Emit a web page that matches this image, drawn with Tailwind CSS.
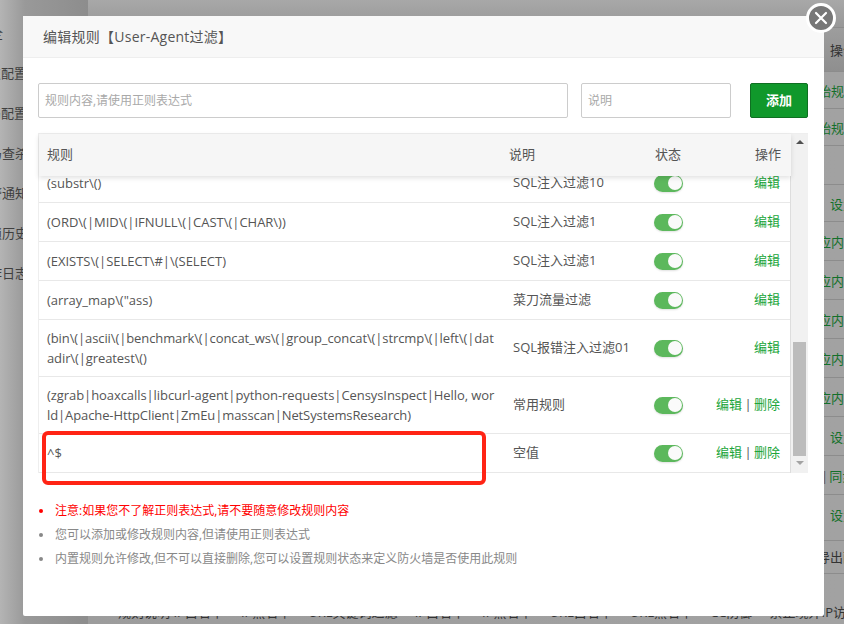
<!DOCTYPE html>
<html lang="zh">
<head>
<meta charset="utf-8">
<script src="https://cdn.jsdelivr.net/npm/@tailwindcss/browser@4"></script>
</head>
<body class="m-0 font-['Open_Sans','Noto_Sans_CJK_SC',sans-serif]">
<div class="relative w-[844px] h-[624px] overflow-hidden bg-[#a3a3a3] text-[14px] text-[#333]">
  <!-- page behind the overlay -->
  <div class="flex h-full">
    <aside class="w-[88px] shrink-0 pt-[13px] bg-[linear-gradient(90deg,#b4b4b4,#999999_25px,#8d8d8d)] text-[13px] text-[#3f3f3f]">
      <div class="w-[3px] h-[40px] leading-[40px] flex justify-end whitespace-nowrap">网站安全</div>
      <div class="w-[27px] h-[40px] leading-[40px] flex justify-end whitespace-nowrap">站点配置</div>
      <div class="w-[27px] h-[40px] leading-[40px] flex justify-end whitespace-nowrap">全局配置</div>
      <div class="w-[28px] h-[40px] leading-[40px] flex justify-end whitespace-nowrap">木马查杀</div>
      <div class="w-[28px] h-[40px] leading-[40px] flex justify-end whitespace-nowrap">告警通知</div>
      <div class="w-[28px] h-[40px] leading-[40px] flex justify-end whitespace-nowrap">封锁历史</div>
      <div class="w-[28px] h-[40px] leading-[40px] flex justify-end whitespace-nowrap">操作日志</div>
    </aside>
    <main class="flex-1 min-w-0 flex flex-col bg-gradient-to-r from-[#9c9c9c] to-[#a2a2a2] text-[13px] whitespace-nowrap">
      <div class="h-[28px] bg-gradient-to-b from-[#a8a8a8] to-[#989898] border-b border-[#8c8c8c]"></div>
      <div class="h-[44px] leading-[45px] border-b border-[#8c8c8c] pl-[742px] bg-gradient-to-b from-[#9d9d9d] to-[#8f8f8f] text-[#333]">操作</div>
      <div class="h-[37px] leading-[38px] border-b border-[#8c8c8c] pl-[717px] text-[#14702a]">开始规则</div>
      <div class="h-[37px] leading-[38px] border-b border-[#8c8c8c] pl-[717px] text-[#14702a]">开始规则</div>
      <div class="h-[39px] border-b border-[#8c8c8c]"></div>
      <div class="h-[37px] leading-[38px] border-b border-[#8c8c8c] pl-[742px] text-[#14702a]">设置</div>
      <div class="h-[39px] leading-[40px] border-b border-[#8c8c8c] pl-[717px] text-[#14702a]">响应内容</div>
      <div class="h-[39px] leading-[40px] border-b border-[#8c8c8c] pl-[717px] text-[#14702a]">响应内容</div>
      <div class="h-[39px] leading-[40px] border-b border-[#8c8c8c] pl-[717px] text-[#14702a]">响应内容</div>
      <div class="h-[39px] leading-[40px] border-b border-[#8c8c8c] pl-[717px] text-[#14702a]">响应内容</div>
      <div class="h-[39px] leading-[40px] border-b border-[#8c8c8c] pl-[717px] text-[#14702a]">响应内容</div>
      <div class="h-[39px] leading-[40px] border-b border-[#8c8c8c] pl-[742px] text-[#14702a]">设置</div>
      <div class="h-[39px] leading-[40px] border-b border-[#8c8c8c] pl-[733px] text-[#14702a]"><span class="text-[#555] mr-[1px]">|</span>同步</div>
      <div class="h-[46px] leading-[40px] border-b border-[#8c8c8c] pl-[742px] text-[#14702a]">设置</div>
      <div class="h-[33px] leading-[33px] border-b border-[#8c8c8c] pl-[729px] text-[#333]">导出配置</div>
      <div class="mt-[29px] ml-[30px] flex gap-[17px] text-[#333] leading-[18px]">
        <span>规则说明·IP白名单</span><span>IP黑名单</span><span>URL关键词过滤</span><span>IP白名单</span><span>IP黑名单</span><span>URL白名单</span><span>URL黑名单</span><span>CC防御</span><span>禁止境外IP访问</span>
      </div>
    </main>
  </div>

  <!-- modal -->
  <section class="absolute left-[23px] top-[16px] w-[801px] h-[600px] bg-white rounded-[2px] flex flex-col">
    <header class="h-[42px] shrink-0 pl-[20px] leading-[42px] bg-[#f8f8f8] border-b border-[#eeeeee] text-[14px] tracking-[0.25px] text-[#555]">编辑规则【User-Agent过滤】</header>

    <div class="flex-1 flex flex-col pl-[15px] pr-[16px] pt-[25px]">
      <div class="flex h-[35px] text-[12px]">
        <div class="w-[530px] border border-[#cccccc] rounded-[2px] pl-[6px] leading-[33px] text-[#a9a9a9]">规则内容,请使用正则表达式</div>
        <div class="w-[150px] ml-[13px] border border-[#cccccc] rounded-[2px] pl-[6px] leading-[33px] text-[#a9a9a9]">说明</div>
        <button class="w-[58px] ml-[19px] rounded-[2px] bg-[#10982b] border border-[#0f6f22] text-white text-[13px] font-semibold">添加</button>
      </div>

      <div class="relative mt-[15px] h-[340px] w-[770px] flex border-t border-l border-[#eeeeee] text-[13px] text-[#555]">
        <div class="w-[752px] h-full flex flex-col">
          <div class="relative z-10 h-[42px] shrink-0 flex items-center bg-[#f6f6f6] shadow-[0_2px_5px_rgba(0,0,0,0.12)] pr-[10px]">
            <span class="w-[470px] pl-[8px]">规则</span>
            <span class="w-[146px]">说明</span>
            <span class="w-[92px]">状态</span>
            <span class="ml-auto">操作</span>
          </div>
          <div class="flex-1 overflow-hidden border-r border-[#dddddd]">
            <div class="-mt-[12px]">
              <!-- rows -->
              <div class="h-[39px] flex items-center border-b border-[#e8e8e8] pr-[10px]">
                <div class="w-[474px] shrink-0 pl-[8px] pr-[16px] break-all leading-[20px] tracking-[-0.02px]">(substr\()</div>
                <div class="w-[141px] shrink-0">SQL注入过滤10</div>
                <div class="w-[29px] h-[17px] shrink-0 flex justify-end items-center pr-[1px] rounded-full bg-[#5cb85c] shadow-[0_1px_2px_rgba(0,0,0,0.12)]"><span class="w-[14px] h-[14px] rounded-full bg-[#fafafa]"></span></div>
                <div class="ml-auto text-[#20a53a]">编辑</div>
              </div>
              <div class="h-[39px] flex items-center border-b border-[#e8e8e8] pr-[10px]">
                <div class="w-[474px] shrink-0 pl-[8px] pr-[16px] break-all leading-[20px] tracking-[-0.02px]">(ORD\(|MID\(|IFNULL\(|CAST\(|CHAR\))</div>
                <div class="w-[141px] shrink-0">SQL注入过滤1</div>
                <div class="w-[29px] h-[17px] shrink-0 flex justify-end items-center pr-[1px] rounded-full bg-[#5cb85c] shadow-[0_1px_2px_rgba(0,0,0,0.12)]"><span class="w-[14px] h-[14px] rounded-full bg-[#fafafa]"></span></div>
                <div class="ml-auto text-[#20a53a]">编辑</div>
              </div>
              <div class="h-[39px] flex items-center border-b border-[#e8e8e8] pr-[10px]">
                <div class="w-[474px] shrink-0 pl-[8px] pr-[16px] break-all leading-[20px] tracking-[-0.02px]">(EXISTS\(|SELECT\#|\(SELECT)</div>
                <div class="w-[141px] shrink-0">SQL注入过滤1</div>
                <div class="w-[29px] h-[17px] shrink-0 flex justify-end items-center pr-[1px] rounded-full bg-[#5cb85c] shadow-[0_1px_2px_rgba(0,0,0,0.12)]"><span class="w-[14px] h-[14px] rounded-full bg-[#fafafa]"></span></div>
                <div class="ml-auto text-[#20a53a]">编辑</div>
              </div>
              <div class="h-[39px] flex items-center border-b border-[#e8e8e8] pr-[10px]">
                <div class="w-[474px] shrink-0 pl-[8px] pr-[16px] break-all leading-[20px] tracking-[-0.02px]">(array_map\("ass)</div>
                <div class="w-[141px] shrink-0">菜刀流量过滤</div>
                <div class="w-[29px] h-[17px] shrink-0 flex justify-end items-center pr-[1px] rounded-full bg-[#5cb85c] shadow-[0_1px_2px_rgba(0,0,0,0.12)]"><span class="w-[14px] h-[14px] rounded-full bg-[#fafafa]"></span></div>
                <div class="ml-auto text-[#20a53a]">编辑</div>
              </div>
              <div class="h-[57px] flex items-center border-b border-[#e8e8e8] pr-[10px]">
                <div class="w-[474px] shrink-0 pl-[8px] pr-[16px] break-all leading-[20px] tracking-[-0.1px]">(bin\(|ascii\(|benchmark\(|concat_ws\(|group_concat\(|strcmp\(|left\(|datadir\(|greatest\()</div>
                <div class="w-[141px] shrink-0">SQL报错注入过滤01</div>
                <div class="w-[29px] h-[17px] shrink-0 flex justify-end items-center pr-[1px] rounded-full bg-[#5cb85c] shadow-[0_1px_2px_rgba(0,0,0,0.12)]"><span class="w-[14px] h-[14px] rounded-full bg-[#fafafa]"></span></div>
                <div class="ml-auto text-[#20a53a]">编辑</div>
              </div>
              <div class="h-[57px] flex items-center border-b border-[#e8e8e8] pr-[10px]">
                <div class="w-[474px] shrink-0 pl-[8px] break-all leading-[20px] tracking-[-0.1px]"><span class="tracking-[-0.07px]">(zgrab|hoaxcalls|libcurl-agent|python-requests|CensysInspect|Hello, wor</span><br>ld|Apache-HttpClient|ZmEu|masscan|NetSystemsResearch)</div>
                <div class="w-[141px] shrink-0">常用规则</div>
                <div class="w-[29px] h-[17px] shrink-0 flex justify-end items-center pr-[1px] rounded-full bg-[#5cb85c] shadow-[0_1px_2px_rgba(0,0,0,0.12)]"><span class="w-[14px] h-[14px] rounded-full bg-[#fafafa]"></span></div>
                <div class="ml-auto text-[#20a53a] flex">编辑<span class="w-[12px] text-center text-[#555]">|</span>删除</div>
              </div>
              <div class="h-[39px] flex items-center border-b border-[#e8e8e8] pr-[10px]">
                <div class="w-[474px] shrink-0 pl-[8px] pr-[16px] break-all leading-[20px] tracking-[-0.02px]">^$</div>
                <div class="w-[141px] shrink-0">空值</div>
                <div class="w-[29px] h-[17px] shrink-0 flex justify-end items-center pr-[1px] rounded-full bg-[#5cb85c] shadow-[0_1px_2px_rgba(0,0,0,0.12)]"><span class="w-[14px] h-[14px] rounded-full bg-[#fafafa]"></span></div>
                <div class="ml-auto text-[#20a53a] flex">编辑<span class="w-[12px] text-center text-[#555]">|</span>删除</div>
              </div>
            </div>
          </div>
        </div>
        <!-- scrollbar -->
        <div class="w-[17px] h-full bg-[#f1f1f1] flex flex-col items-center">
          <svg class="mt-[6px] shrink-0" width="8" height="4" viewBox="0 0 8 4"><path d="M4 0L8 4H0Z" fill="#505050"/></svg>
          <div class="mt-[198px] w-[13px] h-[114px] bg-[#bcbcbc]"></div>
          <svg class="mt-[5px] shrink-0" width="8" height="4" viewBox="0 0 8 4"><path d="M0 0H8L4 4Z" fill="#a3a3a3"/></svg>
        </div>
      </div>

      <ul class="mt-[28px] flex flex-col gap-[4px] text-[12px] leading-[20px] text-[#888]">
        <li class="flex items-center text-[#ff0000]"><span class="w-[4px] h-[4px] ml-[1px] mr-[12px] rounded-full bg-[#ff0000]"></span>注意:如果您不了解正则表达式,请不要随意修改规则内容</li>
        <li class="flex items-center"><span class="w-[4px] h-[4px] ml-[1px] mr-[12px] rounded-full bg-[#888]"></span>您可以添加或修改规则内容,但请使用正则表达式</li>
        <li class="flex items-center"><span class="w-[4px] h-[4px] ml-[1px] mr-[12px] rounded-full bg-[#888]"></span>内置规则允许修改,但不可以直接删除,您可以设置规则状态来定义防火墙是否使用此规则</li>
      </ul>
    </div>
  </section>

  <!-- red annotation over the last row -->
  <div class="absolute left-[42px] top-[431px] w-[444px] h-[54px] border-[4px] border-[#ff2415] rounded-[6px]"></div>

  <!-- close button -->
  <div class="absolute left-[806px] top-[3px] w-[30px] h-[30px] rounded-full bg-[#777] border-[3px] border-white flex items-center justify-center">
    <svg width="14" height="14" viewBox="0 0 14 14"><path d="M2 2L12 12M12 2L2 12" stroke="#fff" stroke-width="2.2" stroke-linecap="round"/></svg>
  </div>
</div>
</body>
</html>
